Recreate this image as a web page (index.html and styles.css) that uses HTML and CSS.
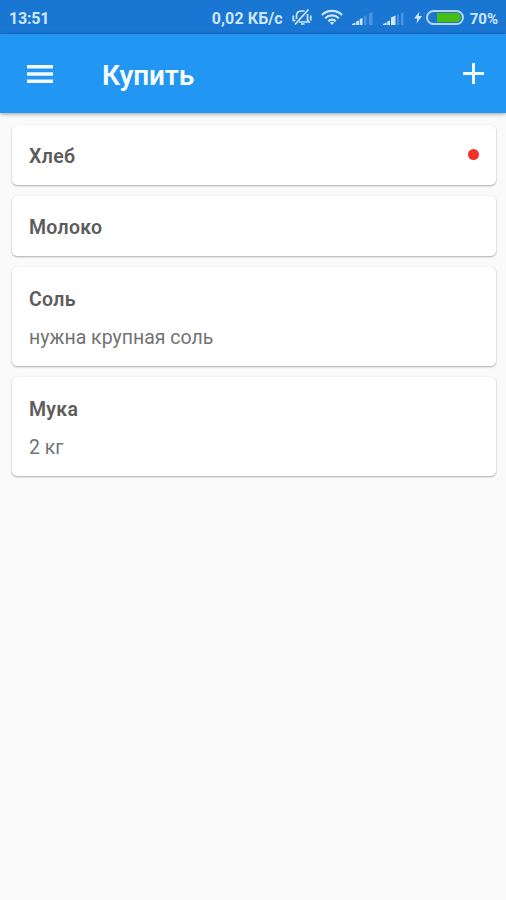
FILE: index.html
```html
<!DOCTYPE html>
<html lang="ru">
<head>
<meta charset="utf-8">
<title>Купить</title>
<link rel="stylesheet" href="styles.css">
</head>
<body>
<div class="status">
  <span class="clock">13:51</span>
  <span class="speed">0,02 КБ/с</span>
  <svg class="mute" width="20" height="18" viewBox="0 0 20 18" fill="none" stroke="currentColor" stroke-width="1.700">
    <path d="M4.500 11V7.500C4.500 4.500 6.500 3 10 3H12.500M15.500 6V12L17 14H7M9 16H12.500"/>
    <path d="M1.300 7.500V12.500H3.500M18.700 7.500V12.500"/>
    <path d="M3 16.500L16.500 1.500"/>
  </svg>
  <svg class="wifi" width="22" height="17" viewBox="0 0 22 17" fill="none" stroke="currentColor" stroke-width="2.300">
    <path d="M1 6C6.500 .6 15.500 .6 21 6M4.200 9.200C8 5.500 14 5.500 17.800 9.200M7.300 12.200C9.400 10 12.600 10 14.700 12.200"/>
    <path d="M8.800 13.600Q11 11.800 13.200 13.600L11 16Z" fill="currentColor" stroke="none"/>
  </svg>
  <svg class="signal" width="21" height="13" viewBox="0 0 21 13" fill="currentColor">
    <path d="M0 13V12L3.500 10.500V13ZM4.200 13V9.500L7 8.500V13ZM7.700 13V7L10.500 6V13Z"/>
    <path class="dim" d="M12 13V4.500L14.500 3V13ZM17 13V1.500L20.500 0V13Z"/>
  </svg>
  <svg class="signal second" width="21" height="13" viewBox="0 0 21 13" fill="currentColor">
    <path d="M0 13V12L3.500 10.500V13ZM4.200 13V9.500L7 8.500V13ZM8 13V5.500L12.500 3.500V13Z"/>
    <path class="dim" d="M14 13V3L16 2V13ZM18 13V1.500L20.500 0V13Z"/>
  </svg>
  <svg class="bolt" width="8" height="13" viewBox="0 0 8 12" fill="currentColor"><path d="M5.500 0L0 7H3.300L2.500 12L8 4.500H4.600Z"/></svg>
  <span class="battery"><span class="charge"></span></span>
  <span class="percent">70%</span>
</div>
<header class="bar">
  <svg class="menu" width="26" height="19" viewBox="0 0 26 19" fill="#f4faff"><path d="M0 0H26V3.500H0ZM0 7.300H26V10.800H0ZM0 14.600H26V18.100H0Z"/></svg>
  <h1>Купить</h1>
  <svg class="add" width="21" height="21" viewBox="0 0 21 21" fill="#f4faff"><path d="M9 0H12V9H21V12H12V21H9V12H0V9H9Z"/></svg>
</header>
<main>
  <article class="card"><h2>Хлеб</h2><span class="dot"></span></article>
  <article class="card"><h2>Молоко</h2></article>
  <article class="card tall"><h2>Соль</h2><p>нужна крупная соль</p></article>
  <article class="card tall"><h2>Мука</h2><p>2 кг</p></article>
</main>
</body>
</html>
```
FILE: styles.css
```css
* { box-sizing: border-box; }
body { margin: 0; height: 900px; background: #fafafa; font-family: Roboto, sans-serif; overflow: hidden; }
svg { display: block; flex: none; }
h1, h2, p { margin: 0; white-space: nowrap; }

.status { display: flex; align-items: center; height: 34px; padding: 2px 8px 0 9px; background: #1976d2; color: #cfe6fb; font-size: 16px; font-weight: 700; line-height: 32px; white-space: nowrap; }
.clock { width: 203px; letter-spacing: -.2px; padding-top: 1px; }
.speed { width: 80px; letter-spacing: .1px; padding-top: 1px; }
.mute { margin-top: -2px; }
.wifi { margin: -1px 9px 0 9px; }
.signal { margin-top: 1px; }
.second { margin-left: 10px; }
.dim { opacity: .27; }
.bolt { margin: -2px 4px 0 10px; }
.battery { flex: none; width: 38px; height: 15px; padding: 1px; border: 2px solid #b5d7f5; border-radius: 8px; margin-top: -1px; }
.charge { display: block; width: 24px; height: 9px; margin-left: auto; background: #48bd13; border-radius: 0 5px 5px 0; }
.percent { margin-left: 6px; padding-top: 1px; font-size: 15px; }

.bar { position: relative; display: flex; align-items: center; height: 79px; padding: 0 22px 0 27px; background: #2196f3; box-shadow: 0 1px 4px rgba(0, 0, 0, .38); }
.menu { margin-top: 2px; }
h1 { margin: 4px auto 0 49px; color: #f8fcff; font-size: 28px; font-weight: 600; line-height: 36px; letter-spacing: -.1px; }

main { display: flex; flex-direction: column; gap: 11px; padding: 12px 10.5px 0 12px; }
.card { display: flex; justify-content: space-between; height: 60px; padding: 20px 17px 0; background: #fff; border-radius: 5px; box-shadow: 0 1px 2px rgba(0, 0, 0, .3), 0 0 1px rgba(0, 0, 0, .12); }
.tall { display: block; height: 99px; padding-top: 21px; }
h2 { color: #5c5c5c; font-size: 19.5px; font-weight: 600; line-height: 24px; letter-spacing: .3px; }
p { margin-top: 14px; color: #737373; font-size: 19.5px; line-height: 24px; }
.dot { width: 11px; height: 11px; margin-top: 4px; border-radius: 50%; background: #f3302a; }
```
